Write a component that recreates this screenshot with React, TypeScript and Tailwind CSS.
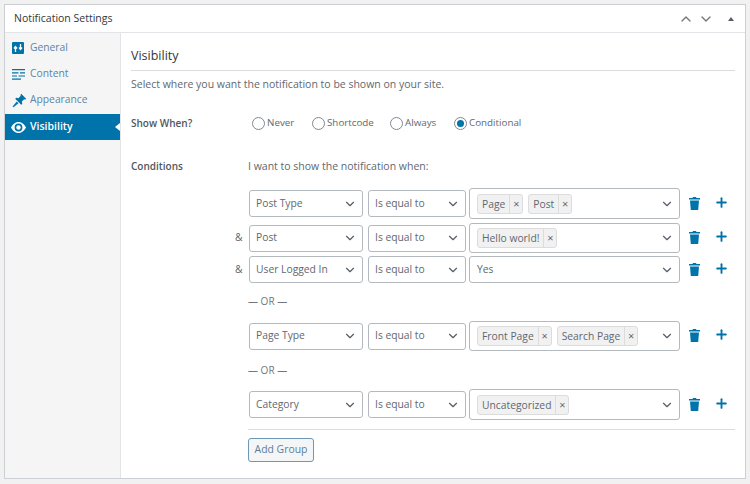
import React from 'react';
import { ChevronDown, ChevronUp, Plus } from 'lucide-react';

const font = { fontFamily: '"Open Sans", sans-serif' };

const GeneralIcon = () => (
  <svg width="12" height="12" viewBox="0 0 12 12" className="text-[#0073aa]">
    <rect width="12" height="12" rx="1" fill="currentColor" />
    <path d="M3.5 10V5M2 6.5 3.5 4.5 5 6.5M8.5 2v5M7 5.5l1.5 2 1.5-2" stroke="#fff" strokeWidth="1.3" fill="none" />
  </svg>
);

const ContentIcon = () => (
  <svg width="13" height="11" viewBox="0 0 13 11" className="text-[#0073aa]" stroke="currentColor" strokeWidth="1.2">
    <path d="M0 .6h13M0 3.8h6.5M8 3.8h5M0 7h5M6.5 7h6.5M0 10.2h9" />
  </svg>
);

const PinIcon = () => (
  <svg width="15" height="15" viewBox="0 0 14 14" fill="#0073aa">
    <path d="M8.6 0.8 13.2 5.4 12.2 6.2 11.4 5.8 9.2 8 9.6 10.2 8.6 11 3 5.4 3.9 4.4 6 4.8 8.2 2.6 7.8 1.8Z" />
    <path d="M4.4 8 6 9.6 1.4 13.4 0.6 12.6Z" />
  </svg>
);

const EyeIcon = () => (
  <svg width="15" height="11" viewBox="0 0 15 11" fill="#fff">
    <path fillRule="evenodd" d="M7.5 0C11 0 13.6 2.6 15 5.5 13.6 8.4 11 11 7.5 11S1.4 8.4 0 5.5C1.4 2.6 4 0 7.5 0ZM7.5 1.6a3.9 3.9 0 1 0 0 7.8 3.9 3.9 0 0 0 0-7.8Z" />
    <circle cx="7.5" cy="5.5" r="2.2" />
  </svg>
);

const TrashIcon = () => (
  <svg width="11" height="13" viewBox="0 0 11 13" fill="#0073aa">
    <path d="M4 0h3l.5 1H11v1.4H0V1h3.5Z" />
    <path d="M1 3.4h9L9.2 13H1.8Z" />
  </svg>
);

const navItems = [
  { label: 'General', icon: <GeneralIcon /> },
  { label: 'Content', icon: <ContentIcon /> },
  { label: 'Appearance', icon: <PinIcon /> },
];

const Select = ({ value, className }: { value: string; className: string }) => (
  <div className={`flex items-center justify-between h-[27px] pl-[6px] pr-[5px] bg-white border border-[#b4b9be] rounded-[3px] text-[10.3px] text-[#5f6870] ${className}`}>
    <span>{value}</span>
    <ChevronDown size={14} strokeWidth={2} className="text-[#555d66]" />
  </div>
);

const Tag = ({ label }: { label: string }) => (
  <span className="flex items-center h-[20px] bg-[#f1f1f1] border border-[#dcdcdc] rounded-[3px] text-[10.3px] text-[#5f6870]">
    <span className="px-[4px] border-r border-[#dcdcdc] leading-[18px]">{label}</span>
    <span className="w-[12px] text-center text-[11px] leading-[18px]">×</span>
  </span>
);

const ValueBox = ({ tags, text, heightClass }: { tags?: string[]; text?: string; heightClass: string }) => (
  <div className={`flex items-center justify-between w-[211px] pl-[7px] pr-[5px] bg-white border border-[#b4b9be] rounded-[3px] ${heightClass}`}>
    <div className="flex items-center gap-[5px]">
      {tags && tags.map((t) => <Tag key={t} label={t} />)}
      {text && <span className="text-[10.3px] text-[#5f6870]">{text}</span>}
    </div>
    <ChevronDown size={14} strokeWidth={2} className="text-[#555d66]" />
  </div>
);

const Row = ({
  field,
  amp,
  tags,
  text,
  heightClass,
  className,
}: {
  field: string;
  amp?: boolean;
  tags?: string[];
  text?: string;
  heightClass: string;
  className?: string;
}) => (
  <div className={`flex items-center ${className || ''}`}>
    <span className="w-[17px] pl-[3px] text-[10.3px] text-[#5f6870]">{amp ? '&' : ''}</span>
    <Select value={field} className="w-[114px]" />
    <Select value="Is equal to" className="w-[98px] ml-[5px]" />
    <div className="ml-[3px]">
      <ValueBox tags={tags} text={text} heightClass={heightClass} />
    </div>
    <div className="ml-[9px] w-[11px] -mt-[1px]">
      <TrashIcon />
    </div>
    <Plus size={15} strokeWidth={3} className="ml-[14px] -mt-[3px] text-[#0073aa]" />
  </div>
);

const Or = ({ className }: { className: string }) => (
  <div className={`ml-[16px] text-[10px] leading-[14px] text-[#72777c] ${className}`}>— OR —</div>
);

const Radio = ({ label, checked, className }: { label: string; checked?: boolean; className: string }) => (
  <label className={`flex items-center gap-[2px] text-[9.8px] text-[#5f6870] ${className}`}>
    <span className="flex items-center justify-center w-[13px] h-[13px] rounded-full border border-[#7e8993] bg-white">
      {checked && <span className="w-[7px] h-[7px] rounded-full bg-[#0073aa]" />}
    </span>
    {label}
  </label>
);

export default function App() {
  return (
    <div className="w-[750px] h-[484px] bg-[#f1f1f1] pt-[4px] pl-[4px] overflow-hidden" style={font}>
      <div className="w-[742px] h-[475px] flex flex-col bg-white border border-[#ccd0d4]">
        {/* Title bar */}
        <div className="flex items-center justify-between h-[28px] pl-[9px] pr-[11px] border-b border-[#e2e4e7] shrink-0">
          <h2 className="text-[10.5px] font-medium text-[#32373c]">Notification Settings</h2>
          <div className="flex items-center">
            <ChevronUp size={16} strokeWidth={2} className="text-[#72777c]" />
            <ChevronDown size={16} strokeWidth={2} className="ml-[4px] text-[#72777c]" />
            <span className="ml-[14px] w-0 h-0 border-x-[3px] border-x-transparent border-b-[4px] border-b-[#555d66]" />
          </div>
        </div>

        <div className="flex flex-1 min-h-0">
          {/* Sidebar */}
          <div className="w-[116px] shrink-0 bg-[#f5f5f5] border-r border-[#e2e4e7] pt-[1px]">
            {navItems.map((item) => (
              <div key={item.label} className="flex items-center h-[26px] pl-[7px] text-[10.3px] text-[#5b86a8] first:mt-[1px]">
                <span className="w-[18px] flex items-center">{item.icon}</span>
                <span>{item.label}</span>
              </div>
            ))}
            <div className="relative flex items-center h-[26px] mt-[1px] pl-[6px] bg-[#0073aa] text-[10.5px] font-semibold text-white">
              <span className="w-[19px] flex items-center"><EyeIcon /></span>
              <span>Visibility</span>
              <span className="absolute right-0 top-[9px] w-0 h-0 border-y-[4px] border-y-transparent border-r-[5px] border-r-white" />
            </div>
          </div>

          {/* Main panel */}
          <div className="flex-1 pl-[10px] pr-[10px]">
            <h3 className="mt-[14px] text-[12.5px] leading-[18px] font-medium text-[#32373c]">Visibility</h3>
            <div className="mt-[5px] border-t border-[#dcdcde]" />
            <p className="mt-[6px] text-[10.5px] leading-[14px] text-[#5f6870]">
              Select where you want the notification to be shown on your site.
            </p>

            <div className="flex items-center mt-[25px]">
              <span className="w-[121px] text-[10px] font-semibold text-[#50575e]">Show When?</span>
              <Radio label="Never" className="w-[60px]" />
              <Radio label="Shortcode" className="w-[78px]" />
              <Radio label="Always" className="w-[64px]" />
              <Radio label="Conditional" checked className="" />
            </div>

            <div className="flex mt-[28px]">
              <span className="w-[101px] shrink-0 text-[10px] leading-[14px] font-semibold text-[#50575e]">Conditions</span>
              <div className="flex-1">
                <p className="ml-[16px] text-[10.5px] leading-[14px] text-[#5f6870]">I want to show the notification when:</p>
                <Row field="Post Type" tags={['Page', 'Post']} heightClass="h-[31px]" className="mt-[15px]" />
                <Row field="Post" amp tags={['Hello world!']} heightClass="h-[30px]" className="mt-[4px]" />
                <Row field="User Logged In" amp text="Yes" heightClass="h-[27px]" className="mt-[3px]" />
                <Or className="mt-[11px]" />
                <Row field="Page Type" tags={['Front Page', 'Search Page']} heightClass="h-[30px]" className="mt-[13px]" />
                <Or className="mt-[12px]" />
                <Row field="Category" tags={['Uncategorized']} heightClass="h-[31px]" className="mt-[12px]" />
                <div className="ml-[16px] mt-[9px] border-t border-[#dcdcde]" />
                <button className="ml-[16px] mt-[8px] h-[24px] w-[66px] bg-[#f3f5f6] border border-[#6c97b5] rounded-[3px] text-[10.4px] text-[#5b7f9b]">
                  Add Group
                </button>
              </div>
            </div>
          </div>
        </div>
      </div>
    </div>
  );
}
